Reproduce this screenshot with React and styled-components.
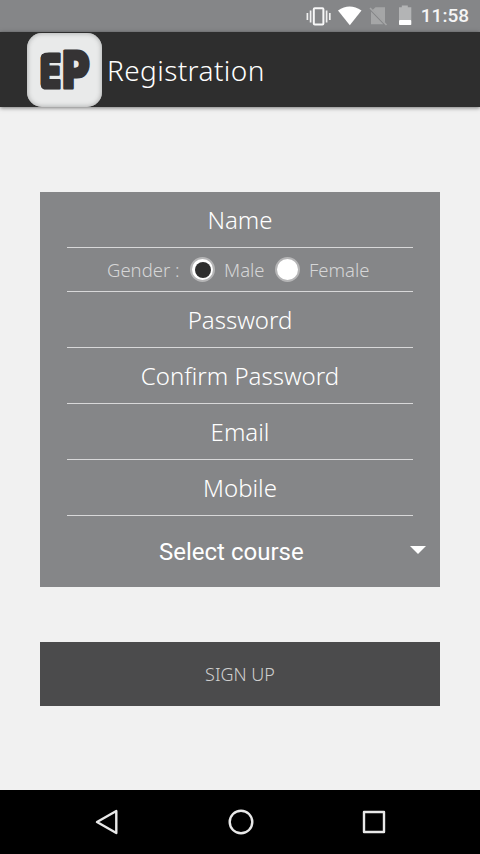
import React, { useState } from 'react';
import styled, { createGlobalStyle } from 'styled-components';

const fields = [
  { label: 'Password', width: 104 },
  { label: 'Confirm Password', width: 196 },
  { label: 'Email', width: 58 },
  { label: 'Mobile', width: 74 },
];

export default function App() {
  const [gender, setGender] = useState('Male');

  return (
    <Screen>
      <GlobalStyle />
      <StatusBar>
        <StatusIcons />
        <Clock>11:58</Clock>
      </StatusBar>
      <Header>
        <Logo />
        <Title>Registration</Title>
      </Header>
      <Content>
        <Card>
          <Field>
            <Label>Name</Label>
          </Field>
          <GenderRow>
            <GenderLabel $width={71}>Gender :</GenderLabel>
            <Radio $left={12} onClick={() => setGender('Male')}>
              {gender === 'Male' && <Dot />}
            </Radio>
            <GenderLabel $width={51}>Male</GenderLabel>
            <Radio $left={0} onClick={() => setGender('Female')}>
              {gender === 'Female' && <Dot />}
            </Radio>
            <GenderLabel $width={71}>Female</GenderLabel>
          </GenderRow>
          {fields.map((field) => (
            <Field key={field.label}>
              <Label>{field.label}</Label>
            </Field>
          ))}
          <Select>
            <Course>Select course</Course>
            <Arrow viewBox="0 0 16 8">
              <path d="M0 0h16L8 8z" fill="#fff" />
            </Arrow>
          </Select>
        </Card>
        <Button>SIGN UP</Button>
      </Content>
      <NavBar>
        <NavIcon viewBox="0 0 28 28">
          <path d="M4 14L23.3 3v22z" />
        </NavIcon>
        <NavIcon viewBox="0 0 28 28">
          <circle cx="14" cy="14" r="11.3" />
        </NavIcon>
        <NavIcon viewBox="0 0 28 28">
          <rect x="4" y="4" width="20" height="20" />
        </NavIcon>
      </NavBar>
    </Screen>
  );
}

function StatusIcons() {
  return (
    <svg width="108" height="24" viewBox="306 4 108 24">
      <rect x="313.8" y="8.2" width="9.6" height="16.2" rx="1" fill="none" stroke="#f8f8f8" strokeWidth="2" />
      <path d="M310.6 10.5v12M307.4 13v7M326.6 10.5v12M329.8 13v7" stroke="#f0f0f0" strokeWidth="1.7" />
      <path d="M338 10.6Q349.5 2.4 361.5 10.6L349.8 25.2z" fill="#fff" />
      <path d="M375.5 7.3H385v15.5L372.6 10.1zM371 11.5L383.3 24.3H371z" fill="#a5a6a7" />
      <path d="M370 8L386.5 25" stroke="#a5a6a7" strokeWidth="1.6" />
      <path d="M399 7.2h2.8V5.6h6v1.6h3.5V20H399z" fill="#b3b4b5" />
      <rect x="399" y="20" width="12.3" height="5" rx="0.8" fill="#fff" />
    </svg>
  );
}

function Logo() {
  return (
    <LogoTile>
      <svg width="54" height="46" viewBox="38 47 54 46">
        <defs>
          <clipPath id="mark">
            <path d="M51 46H92V91H48Q39.5 90 39.5 80V62Q39.5 52 49 52z" />
          </clipPath>
        </defs>
        <g clipPath="url(#mark)" fill="#353334" stroke="#353334" strokeWidth="3" strokeLinejoin="round">
          <LogoText x="40" y="88" textLength="21" lengthAdjust="spacingAndGlyphs" fontSize="47">E</LogoText>
          <LogoText x="62.5" y="88" textLength="27" lengthAdjust="spacingAndGlyphs" fontSize="51">P</LogoText>
        </g>
      </svg>
    </LogoTile>
  );
}

const GlobalStyle = createGlobalStyle`
  body {
    margin: 0;
    background: #f1f1f1;
  }

  * {
    box-sizing: border-box;
  }
`;

const Screen = styled.div`
  display: flex;
  flex-direction: column;
  width: 480px;
  height: 854px;
  overflow: hidden;
  background: #f1f1f1;
  color: #fff;
  font-family: 'Noto Sans', sans-serif;
`;

const StatusBar = styled.div`
  display: flex;
  align-items: center;
  justify-content: flex-end;
  gap: 7px;
  height: 32px;
  padding-right: 11px;
  background: #858688;
`;

const Clock = styled.span`
  font: 500 19px/32px Roboto, sans-serif;
  color: #f5f5f5;
`;

const Header = styled.header`
  display: flex;
  align-items: center;
  height: 75px;
  padding-left: 27px;
  background: #2e2e2e;
  box-shadow: 0 1px 4px rgba(0, 0, 0, 0.5);
`;

const LogoTile = styled.div`
  display: flex;
  align-items: center;
  justify-content: center;
  width: 75px;
  height: 74px;
  border-radius: 15px;
  background: #e9eaea;
  box-shadow: inset 0 0 4px 1px #b5b6b6;
`;

const LogoText = styled.text`
  font-family: Inter, sans-serif;
  font-weight: 900;
`;

const Title = styled.h1`
  margin: 0 0 0 5px;
  font-size: 28px;
  font-weight: 300;
  line-height: 38px;
  letter-spacing: 0.4px;
`;

const Content = styled.main`
  display: flex;
  flex: 1;
  flex-direction: column;
  gap: 55px;
  padding: 85px 40px 0;
`;

const Card = styled.div`
  display: flex;
  flex-direction: column;
  height: 395px;
  padding: 0 27px;
  background: #858688;
`;

const Field = styled.div`
  display: flex;
  align-items: center;
  justify-content: center;
  height: 56px;
  border-bottom: 1.5px solid #d8d8d9;
`;

const Label = styled.span`
  font-size: 24px;
  font-weight: 300;
  line-height: 32px;
`;

const GenderRow = styled(Field)`
  justify-content: flex-start;
  height: 44px;
  padding-left: 40px;
`;

const GenderLabel = styled.span`
  width: ${(props) => props.$width}px;
  font-size: 18.5px;
  font-weight: 300;
  white-space: nowrap;
  color: #d6d6d7;
`;

const Radio = styled.div`
  display: flex;
  flex-shrink: 0;
  align-items: center;
  justify-content: center;
  width: 25px;
  height: 25px;
  margin: 0 9px 0 ${(props) => props.$left}px;
  border: 2px solid #b5b5b6;
  border-radius: 50%;
  background: #fff;
`;

const Dot = styled.div`
  width: 16px;
  height: 16px;
  border-radius: 50%;
  background: #2e2e2e;
`;

const Select = styled.div`
  display: flex;
  align-items: center;
  justify-content: space-between;
  height: 71px;
  margin-right: -13px;
`;

const Course = styled.span`
  padding-left: 92px;
  font: 400 24px/32px Roboto, sans-serif;
`;

const Arrow = styled.svg`
  width: 16px;
  height: 8px;
  margin-bottom: 4px;
`;

const Button = styled.button`
  height: 64px;
  padding: 0;
  border: none;
  background: #4b4b4c;
  color: #cfcfcf;
  font-family: 'Noto Sans', sans-serif;
  font-size: 18px;
  font-weight: 300;
`;

const NavBar = styled.nav`
  display: flex;
  align-items: center;
  justify-content: space-between;
  height: 64px;
  padding: 0 92px 0 93px;
  background: #000;
`;

const NavIcon = styled.svg`
  width: 28px;
  height: 28px;
  fill: none;
  stroke: #e8e8e8;
  stroke-width: 2.4;
  stroke-linejoin: round;
`;
